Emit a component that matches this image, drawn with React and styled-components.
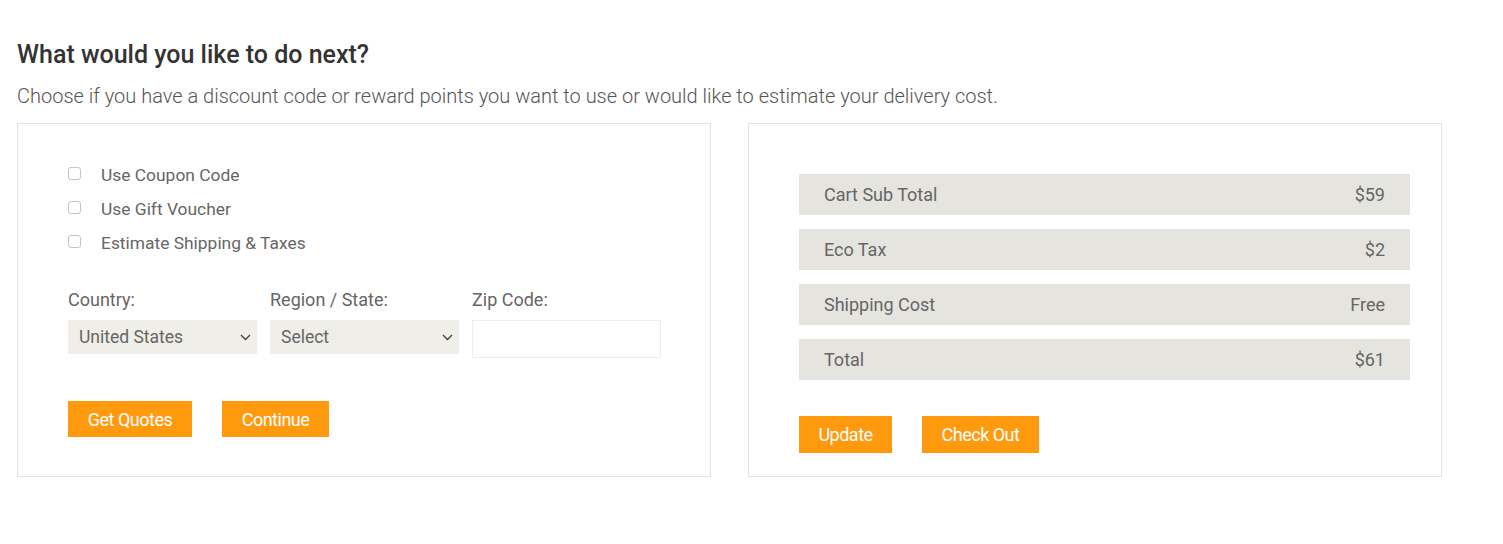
import React from 'react';
import styled, { createGlobalStyle } from 'styled-components';

const GlobalStyle = createGlobalStyle`
  body {
    margin: 0;
    background: #fff;
    font-family: Roboto, 'Liberation Sans', sans-serif;
  }
`;

const rows = [
  { label: 'Cart Sub Total', value: '$59' },
  { label: 'Eco Tax', value: '$2' },
  { label: 'Shipping Cost', value: 'Free' },
  { label: 'Total', value: '$61' },
];

const options = ['Use Coupon Code', 'Use Gift Voucher', 'Estimate Shipping & Taxes'];

const Chevron = () => (
  <svg width='11' height='7' viewBox='0 0 11 7' fill='none'>
    <path d='M1 1l4.5 4.5L10 1' stroke='#444' strokeWidth='1.4' />
  </svg>
);

export default function App() {
  return (
    <Page>
      <GlobalStyle />
      <Title>What would you like to do next?</Title>
      <Lead>Choose if you have a discount code or reward points you want to use or would like to estimate your delivery cost.</Lead>
      <Panels>
        <Panel $pad='34px 50px 39px'>
          <CheckList>
            {options.map((o) => (
              <CheckRow key={o}>
                <Box />
                <span>{o}</span>
              </CheckRow>
            ))}
          </CheckList>
          <Fields>
            <Field>
              <FieldLabel>Country:</FieldLabel>
              <SelectWrap>
                <Select defaultValue='us'>
                  <option value='us'>United States</option>
                </Select>
                <ArrowIcon><Chevron /></ArrowIcon>
              </SelectWrap>
            </Field>
            <Field>
              <FieldLabel>Region / State:</FieldLabel>
              <SelectWrap>
                <Select defaultValue='sel'>
                  <option value='sel'>Select</option>
                </Select>
                <ArrowIcon><Chevron /></ArrowIcon>
              </SelectWrap>
            </Field>
            <Field>
              <FieldLabel>Zip Code:</FieldLabel>
              <ZipInput type='text' />
            </Field>
          </Fields>
          <Buttons $top='43px'>
            <OrangeButton $w='124px'>Get Quotes</OrangeButton>
            <OrangeButton $w='107px'>Continue</OrangeButton>
          </Buttons>
        </Panel>
        <Panel $pad='50px 31px 23px 50px'>
          <Totals>
            {rows.map((r) => (
              <TotalRow key={r.label}>
                <span>{r.label}</span>
                <span>{r.value}</span>
              </TotalRow>
            ))}
          </Totals>
          <Buttons $top='36px'>
            <OrangeButton $w='93px' $h='37px'>Update</OrangeButton>
            <OrangeButton $w='117px' $h='37px'>Check Out</OrangeButton>
          </Buttons>
        </Panel>
      </Panels>
    </Page>
  );
}

const Page = styled.div`
  padding: 40px 17px 0;
`;

const Title = styled.h2`
  margin: 0;
  font-size: 25px;
  font-weight: 500;
  color: #333;
  line-height: 30px;
`;

const Lead = styled.p`
  margin: 13px 0 0;
  font-size: 20px;
  font-weight: 300;
  color: #555;
  line-height: 26px;
`;

const Panels = styled.div`
  display: flex;
  gap: 37px;
  margin-top: 14px;
`;

const Panel = styled.div`
  width: 694px;
  height: 354px;
  box-sizing: border-box;
  border: 1px solid #e3e3e3;
  padding: ${(p) => p.$pad};
`;

const CheckList = styled.div`
  display: flex;
  flex-direction: column;
`;

const CheckRow = styled.label`
  display: flex;
  align-items: center;
  height: 34px;
  font-size: 17.4px;
  color: #666;
  span {
    margin-left: 20px;
  }
`;

const Box = styled.span`
  box-sizing: border-box;
  width: 13px;
  height: 13px;
  margin-top: -3px;
  border: 1px solid #c4c4c4;
  border-radius: 3px;
  background: #fff;
  && {
    margin-left: 0;
  }
`;

const Fields = styled.div`
  display: grid;
  grid-template-columns: repeat(3, 189px);
  gap: 13px;
  margin-top: 29px;
`;

const Field = styled.div`
  display: flex;
  flex-direction: column;
`;

const FieldLabel = styled.div`
  font-size: 18px;
  color: #666;
  line-height: 22px;
  margin-bottom: 9px;
`;

const SelectWrap = styled.div`
  position: relative;
  height: 34px;
`;

const Select = styled.select`
  appearance: none;
  width: 100%;
  height: 34px;
  border: none;
  background: #efeee8;
  padding: 0 11px;
  font-family: Roboto, 'Liberation Sans', sans-serif;
  font-size: 17.5px;
  color: #666;
  outline: none;
`;

const ArrowIcon = styled.span`
  position: absolute;
  right: 6px;
  top: 14px;
  display: flex;
  pointer-events: none;
`;

const ZipInput = styled.input`
  box-sizing: border-box;
  width: 189px;
  height: 38px;
  border: 1px solid #eeede7;
  background: #fff;
  outline: none;
`;

const Buttons = styled.div`
  display: flex;
  gap: 30px;
  margin-top: ${(p) => p.$top};
`;

const OrangeButton = styled.button`
  width: ${(p) => p.$w};
  height: ${(p) => p.$h || '36px'};
  border: none;
  background: #ff9a0f;
  color: #fff;
  font-family: Roboto, 'Liberation Sans', sans-serif;
  font-size: 18px;
  letter-spacing: -0.5px;
  padding: 0;
`;

const Totals = styled.div`
  display: flex;
  flex-direction: column;
  gap: 14px;
`;

const TotalRow = styled.div`
  display: flex;
  justify-content: space-between;
  align-items: center;
  height: 41px;
  padding: 0 25px;
  background: #e5e4df;
  font-size: 18px;
  color: #666;
`;
